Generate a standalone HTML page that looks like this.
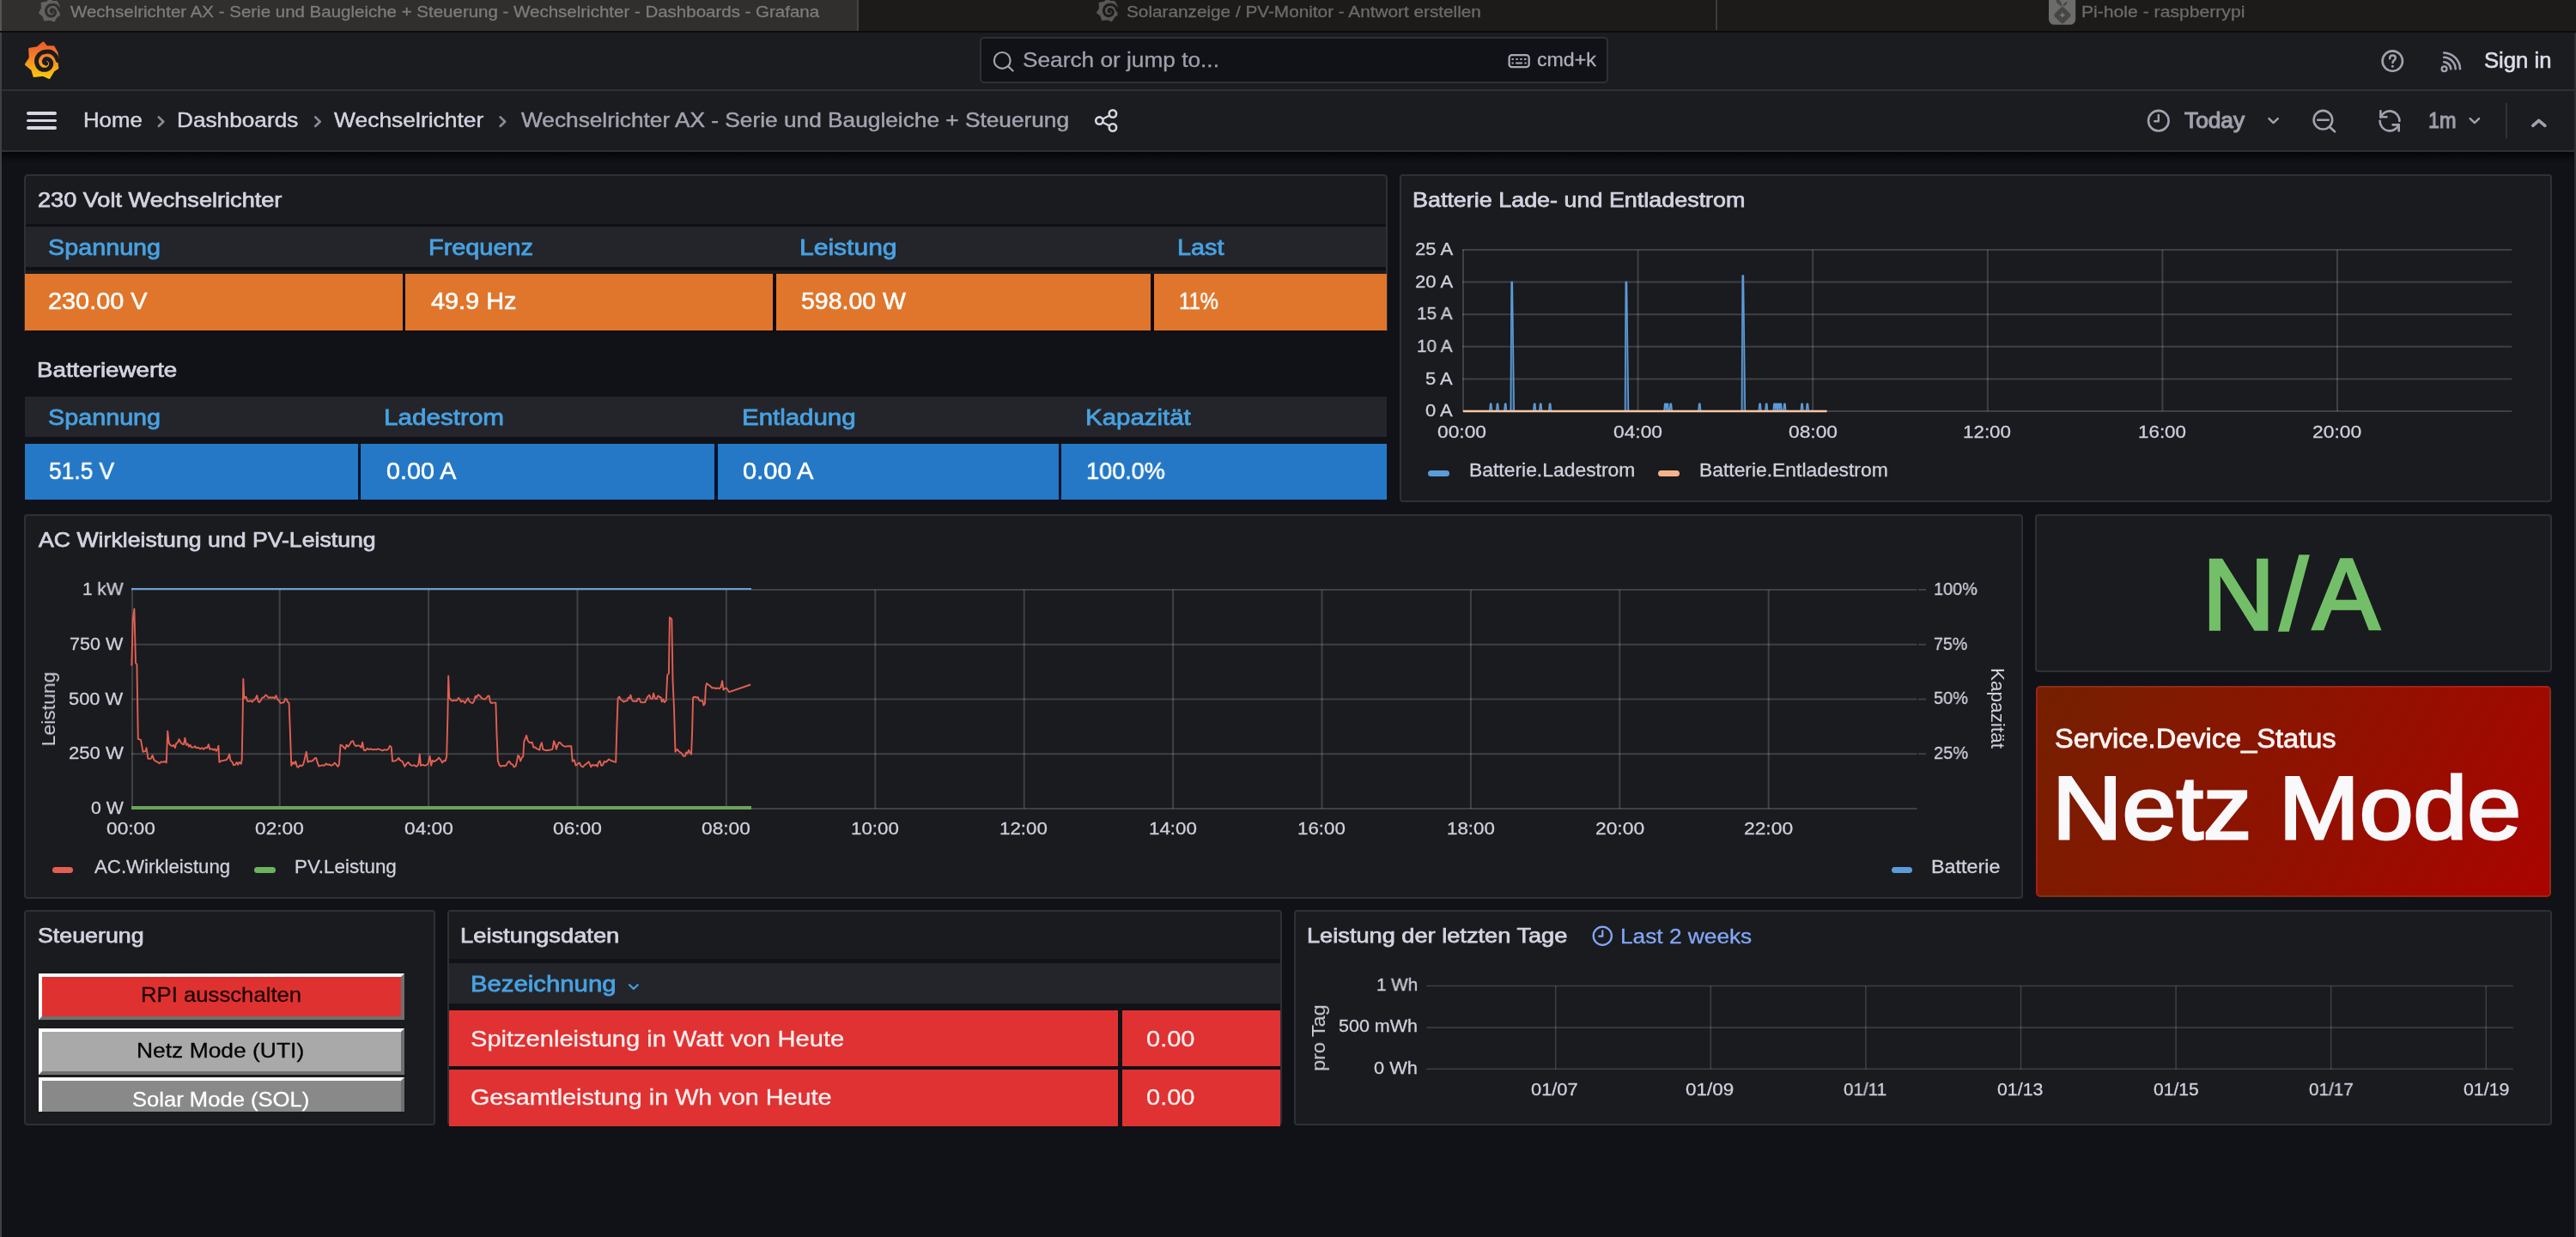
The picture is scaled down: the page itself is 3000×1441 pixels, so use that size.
<!DOCTYPE html>
<html lang="en"><head><meta charset="utf-8"><title>Wechselrichter AX - Serie und Baugleiche + Steuerung - Wechselrichter - Dashboards - Grafana</title>
<style>
html,body{margin:0;padding:0;background:#111217;}
body{width:3000px;height:1441px;position:relative;overflow:hidden;font-family:"Liberation Sans",sans-serif;}
body>div,body>span,body>svg{position:absolute;}
.t{white-space:nowrap;line-height:1;transform-origin:0 50%;will-change:transform;}
</style></head><body>
<div style="left:0px;top:0px;width:3000px;height:36px;background:#1c1b19;"></div>
<div style="left:0px;top:0px;width:1000px;height:36px;background:#302f2d;"></div>
<div style="left:998px;top:0px;width:2px;height:36px;background:#424241;"></div>
<div style="left:0px;top:0px;width:2px;height:36px;background:#555553;"></div>
<div style="left:1998px;top:0px;width:2px;height:35px;background:#3c3b3a;"></div>
<span class="t " style="left:82.05px;top:5.19px;font-size:18.2px;color:#7c7c7b;-webkit-text-stroke:0.3px #7c7c7b;transform:scaleX(1.1265);">Wechselrichter AX - Serie und Baugleiche + Steuerung - Wechselrichter - Dashboards - Grafana</span>
<span class="t " style="left:1312.42px;top:5.19px;font-size:18.2px;color:#6b6b6a;-webkit-text-stroke:0.3px #6b6b6a;transform:scaleX(1.1408);">Solaranzeige / PV-Monitor - Antwort erstellen</span>
<span class="t " style="left:2424.40px;top:4.99px;font-size:18.2px;color:#6b6b6a;-webkit-text-stroke:0.3px #6b6b6a;transform:scaleX(1.1628);">Pi-hole - raspberrypi</span>
<div style="left:0px;top:36px;width:3000px;height:2px;background:#0c0c0e;"></div>
<div style="left:0px;top:38px;width:3000px;height:139px;background:#1b1c20;"></div>
<div style="left:0px;top:104px;width:3000px;height:2px;background:#2f3035;"></div>
<div style="left:0px;top:175px;width:3000px;height:2px;background:#2f3035;"></div>
<div style="left:1141px;top:43px;width:732px;height:54px;background:#111217;border:2px solid #2f3036;border-radius:5px;box-sizing:border-box"></div>
<span class="t " style="left:1190.97px;top:57.81px;font-size:24.8px;color:#9fa0ac;-webkit-text-stroke:0.3px #9fa0ac;transform:scaleX(1.0581);">Search or jump to...</span>
<span class="t " style="left:1789.87px;top:58.75px;font-size:21.8px;color:#aeafbb;-webkit-text-stroke:0.3px #aeafbb;transform:scaleX(1.0615);">cmd+k</span>
<span class="t " style="left:2893.35px;top:58.24px;font-size:25.0px;color:#dcdde8;-webkit-text-stroke:0.6px #dcdde8;transform:scaleX(1.0264);">Sign in</span>
<span class="t " style="left:96.90px;top:127.96px;font-size:24.5px;color:#d3d4e0;-webkit-text-stroke:0.45px #d3d4e0;transform:scaleX(1.0523);">Home</span>
<span class="t " style="left:206.36px;top:127.96px;font-size:24.5px;color:#d3d4e0;-webkit-text-stroke:0.45px #d3d4e0;transform:scaleX(1.0697);">Dashboards</span>
<span class="t " style="left:389.49px;top:127.96px;font-size:24.5px;color:#d3d4e0;-webkit-text-stroke:0.45px #d3d4e0;transform:scaleX(1.0792);">Wechselrichter</span>
<span class="t " style="left:606.79px;top:127.96px;font-size:24.5px;color:#a3a4b0;-webkit-text-stroke:0.45px #a3a4b0;transform:scaleX(1.0717);">Wechselrichter AX - Serie und Baugleiche + Steuerung</span>
<span class="t " style="left:2544.16px;top:127.84px;font-size:25px;color:#a0a1ad;-webkit-text-stroke:1.1px #a0a1ad;transform:scaleX(1.0505);">Today</span>
<span class="t " style="left:2827.91px;top:127.84px;font-size:25px;color:#a0a1ad;-webkit-text-stroke:1.1px #a0a1ad;transform:scaleX(0.9299);">1m</span>
<div style="left:2918px;top:120px;width:2px;height:41px;background:#303137;"></div>
<div style="left:31.3px;top:130.0px;width:34.9px;height:3.8px;background:#d6d7e2;border-radius:2px"></div>
<div style="left:31.3px;top:138.7px;width:34.9px;height:3.8px;background:#d6d7e2;border-radius:2px"></div>
<div style="left:31.3px;top:147.29999999999998px;width:34.9px;height:3.8px;background:#d6d7e2;border-radius:2px"></div>
<div style="left:0px;top:177px;width:3000px;height:1264px;background:#111217;"></div>
<div style="left:0;top:177px;width:3000px;height:12px;background:linear-gradient(#050508,#111217)"></div>
<div style="left:0px;top:38px;width:2px;height:1403px;background:#3f4044;"></div>
<div style="left:2998px;top:38px;width:2px;height:1403px;background:#2e2f34;"></div>
<div style="left:28px;top:203px;width:1588px;height:183px;background:#1a1b1f;border:2px solid #2f3035;border-bottom:none;border-radius:5px 5px 0 0;box-sizing:border-box"></div>
<div style="left:30px;top:260.5px;width:1584px;height:3.5px;background:#0f1015;"></div>
<div style="left:30px;top:264px;width:1584px;height:47px;background:#24252a;"></div>
<div style="left:30px;top:311px;width:1584px;height:4px;background:#0f1015;"></div>
<div style="left:29px;top:319px;width:1586px;height:66.60000000000002px;background:#120805;"></div>
<div style="left:29.2px;top:319.2px;width:439.40000000000003px;height:65.40000000000003px;background:#e0762c;"></div>
<div style="left:472px;top:319.2px;width:428.20000000000005px;height:65.40000000000003px;background:#e0762c;"></div>
<div style="left:903.8px;top:319.2px;width:436.20000000000005px;height:65.40000000000003px;background:#e0762c;"></div>
<div style="left:1343.8px;top:319.2px;width:271.20000000000005px;height:65.40000000000003px;background:#e0762c;"></div>
<div style="left:29px;top:462px;width:1586px;height:47px;background:#24252a;"></div>
<div style="left:29px;top:517px;width:1586px;height:65.60000000000002px;background:#04122a;"></div>
<div style="left:29.2px;top:517px;width:387.5px;height:65px;background:#2478c6;"></div>
<div style="left:420px;top:517px;width:412.20000000000005px;height:65px;background:#2478c6;"></div>
<div style="left:835.8px;top:517px;width:396.79999999999995px;height:65px;background:#2478c6;"></div>
<div style="left:1236px;top:517px;width:379px;height:65px;background:#2478c6;"></div>
<span class="t " style="left:43.92px;top:220.73px;font-size:24.3px;color:#d3d4e0;-webkit-text-stroke:0.75px #d3d4e0;transform:scaleX(1.1160);">230 Volt Wechselrichter</span>
<span class="t " style="left:42.99px;top:418.93px;font-size:24.3px;color:#d3d4e0;-webkit-text-stroke:0.75px #d3d4e0;transform:scaleX(1.1403);">Batteriewerte</span>
<span class="t " style="left:56.31px;top:275.07px;font-size:26.5px;color:#47a2e3;-webkit-text-stroke:0.8px #47a2e3;transform:scaleX(1.0848);">Spannung</span>
<span class="t " style="left:499.22px;top:275.07px;font-size:26.5px;color:#47a2e3;-webkit-text-stroke:0.8px #47a2e3;transform:scaleX(1.0890);">Frequenz</span>
<span class="t " style="left:930.52px;top:275.07px;font-size:26.5px;color:#47a2e3;-webkit-text-stroke:0.8px #47a2e3;transform:scaleX(1.1336);">Leistung</span>
<span class="t " style="left:1371.02px;top:275.07px;font-size:26.5px;color:#47a2e3;-webkit-text-stroke:0.8px #47a2e3;transform:scaleX(1.0881);">Last</span>
<span class="t " style="left:55.73px;top:337.07px;font-size:27.8px;color:#ffffff;-webkit-text-stroke:0.55px #ffffff;transform:scaleX(1.0386);">230.00 V</span>
<span class="t " style="left:502.13px;top:337.07px;font-size:27.8px;color:#ffffff;-webkit-text-stroke:0.55px #ffffff;transform:scaleX(1.0376);">49.9 Hz</span>
<span class="t " style="left:933.24px;top:337.07px;font-size:27.8px;color:#ffffff;-webkit-text-stroke:0.55px #ffffff;transform:scaleX(1.0242);">598.00 W</span>
<span class="t " style="left:1372.69px;top:337.07px;font-size:27.8px;color:#ffffff;-webkit-text-stroke:0.55px #ffffff;transform:scaleX(0.8560);">11%</span>
<span class="t " style="left:56.31px;top:473.37px;font-size:26.5px;color:#47a2e3;-webkit-text-stroke:0.8px #47a2e3;transform:scaleX(1.0848);">Spannung</span>
<span class="t " style="left:447.35px;top:473.37px;font-size:26.5px;color:#47a2e3;-webkit-text-stroke:0.8px #47a2e3;transform:scaleX(1.1187);">Ladestrom</span>
<span class="t " style="left:863.67px;top:473.37px;font-size:26.5px;color:#47a2e3;-webkit-text-stroke:0.8px #47a2e3;transform:scaleX(1.1111);">Entladung</span>
<span class="t " style="left:1263.67px;top:473.37px;font-size:26.5px;color:#47a2e3;-webkit-text-stroke:0.8px #47a2e3;transform:scaleX(1.1108);">Kapazität</span>
<span class="t " style="left:56.62px;top:535.27px;font-size:27.8px;color:#ffffff;-webkit-text-stroke:0.55px #ffffff;transform:scaleX(0.9468);">51.5 V</span>
<span class="t " style="left:449.73px;top:535.27px;font-size:27.8px;color:#ffffff;-webkit-text-stroke:0.55px #ffffff;transform:scaleX(1.0328);">0.00 A</span>
<span class="t " style="left:865.31px;top:535.27px;font-size:27.8px;color:#ffffff;-webkit-text-stroke:0.55px #ffffff;transform:scaleX(1.0457);">0.00 A</span>
<span class="t " style="left:1264.74px;top:535.27px;font-size:27.8px;color:#ffffff;-webkit-text-stroke:0.55px #ffffff;transform:scaleX(0.9737);">100.0%</span>
<div style="left:1630px;top:203px;width:1342px;height:382px;background:#1a1b1f;border:2px solid #2f3035;border-radius:4px;box-sizing:border-box"></div>
<span class="t " style="left:1645.45px;top:220.53px;font-size:24.3px;color:#d3d4e0;-webkit-text-stroke:0.75px #d3d4e0;transform:scaleX(1.1076);">Batterie Lade- und Entladestrom</span>
<span class="t " style="left:1647.65px;top:279.14px;font-size:21.1px;color:#cfd0dc;-webkit-text-stroke:0.3px #cfd0dc;transform:scaleX(1.0451);">25 A</span>
<span class="t " style="left:1647.65px;top:316.74px;font-size:21.1px;color:#cfd0dc;-webkit-text-stroke:0.3px #cfd0dc;transform:scaleX(1.0451);">20 A</span>
<span class="t " style="left:1650.30px;top:354.34px;font-size:21.1px;color:#cfd0dc;-webkit-text-stroke:0.3px #cfd0dc;transform:scaleX(0.9823);">15 A</span>
<span class="t " style="left:1650.30px;top:391.94px;font-size:21.1px;color:#cfd0dc;-webkit-text-stroke:0.3px #cfd0dc;transform:scaleX(0.9823);">10 A</span>
<span class="t " style="left:1659.97px;top:429.54px;font-size:21.1px;color:#cfd0dc;-webkit-text-stroke:0.3px #cfd0dc;transform:scaleX(1.0423);">5 A</span>
<span class="t " style="left:1659.97px;top:467.14px;font-size:21.1px;color:#cfd0dc;-webkit-text-stroke:0.3px #cfd0dc;transform:scaleX(1.0423);">0 A</span>
<span class="t " style="left:1674.04px;top:492.44px;font-size:21.1px;color:#cfd0dc;-webkit-text-stroke:0.3px #cfd0dc;transform:scaleX(1.0808);">00:00</span>
<span class="t " style="left:1879.04px;top:492.44px;font-size:21.1px;color:#cfd0dc;-webkit-text-stroke:0.3px #cfd0dc;transform:scaleX(1.0808);">04:00</span>
<span class="t " style="left:2082.64px;top:492.44px;font-size:21.1px;color:#cfd0dc;-webkit-text-stroke:0.3px #cfd0dc;transform:scaleX(1.0808);">08:00</span>
<span class="t " style="left:2286.37px;top:492.44px;font-size:21.1px;color:#cfd0dc;-webkit-text-stroke:0.3px #cfd0dc;transform:scaleX(1.0609);">12:00</span>
<span class="t " style="left:2489.97px;top:492.44px;font-size:21.1px;color:#cfd0dc;-webkit-text-stroke:0.3px #cfd0dc;transform:scaleX(1.0609);">16:00</span>
<span class="t " style="left:2693.21px;top:492.44px;font-size:21.1px;color:#cfd0dc;-webkit-text-stroke:0.3px #cfd0dc;transform:scaleX(1.0852);">20:00</span>
<div style="left:1662.7px;top:547.6999999999999px;width:25.0px;height:7.4px;background:#5b9bd8;border-radius:4px"></div>
<span class="t " style="left:1711.26px;top:537.42px;font-size:21.6px;color:#cfd0dc;-webkit-text-stroke:0.3px #cfd0dc;transform:scaleX(1.0598);">Batterie.Ladestrom</span>
<div style="left:1930.8px;top:547.6999999999999px;width:25.0px;height:7.4px;background:#f3b48b;border-radius:4px"></div>
<span class="t " style="left:1979.26px;top:537.42px;font-size:21.6px;color:#cfd0dc;-webkit-text-stroke:0.3px #cfd0dc;transform:scaleX(1.0582);">Batterie.Entladestrom</span>
<div style="left:28px;top:599px;width:2328px;height:448px;background:#1a1b1f;border:2px solid #2f3035;border-radius:4px;box-sizing:border-box"></div>
<span class="t " style="left:44.91px;top:616.53px;font-size:24.3px;color:#d3d4e0;-webkit-text-stroke:0.75px #d3d4e0;transform:scaleX(1.0971);">AC Wirkleistung und PV-Leistung</span>
<span class="t " style="left:95.99px;top:675.14px;font-size:21.1px;color:#cfd0dc;-webkit-text-stroke:0.3px #cfd0dc;transform:scaleX(0.9888);">1 kW</span>
<span class="t " style="left:81.27px;top:738.89px;font-size:21.1px;color:#cfd0dc;-webkit-text-stroke:0.3px #cfd0dc;transform:scaleX(1.0205);">750 W</span>
<span class="t " style="left:80.27px;top:802.64px;font-size:21.1px;color:#cfd0dc;-webkit-text-stroke:0.3px #cfd0dc;transform:scaleX(1.0369);">500 W</span>
<span class="t " style="left:79.54px;top:866.39px;font-size:21.1px;color:#cfd0dc;-webkit-text-stroke:0.3px #cfd0dc;transform:scaleX(1.0489);">250 W</span>
<span class="t " style="left:105.70px;top:930.14px;font-size:21.1px;color:#cfd0dc;-webkit-text-stroke:0.3px #cfd0dc;transform:scaleX(1.0080);">0 W</span>
<span class="t " style="left:2251.56px;top:674.94px;font-size:21.1px;color:#cfd0dc;-webkit-text-stroke:0.3px #cfd0dc;transform:scaleX(0.9411);">100%</span>
<span class="t " style="left:2252.07px;top:738.69px;font-size:21.1px;color:#cfd0dc;-webkit-text-stroke:0.3px #cfd0dc;transform:scaleX(0.9293);">75%</span>
<span class="t " style="left:2252.25px;top:802.44px;font-size:21.1px;color:#cfd0dc;-webkit-text-stroke:0.3px #cfd0dc;transform:scaleX(0.9442);">50%</span>
<span class="t " style="left:2252.05px;top:866.19px;font-size:21.1px;color:#cfd0dc;-webkit-text-stroke:0.3px #cfd0dc;transform:scaleX(0.9491);">25%</span>
<span class="t " style="left:123.84px;top:954.14px;font-size:21.1px;color:#cfd0dc;-webkit-text-stroke:0.3px #cfd0dc;transform:scaleX(1.0769);">00:00</span>
<span class="t " style="left:297.24px;top:954.14px;font-size:21.1px;color:#cfd0dc;-webkit-text-stroke:0.3px #cfd0dc;transform:scaleX(1.0769);">02:00</span>
<span class="t " style="left:470.64px;top:954.14px;font-size:21.1px;color:#cfd0dc;-webkit-text-stroke:0.3px #cfd0dc;transform:scaleX(1.0769);">04:00</span>
<span class="t " style="left:644.04px;top:954.14px;font-size:21.1px;color:#cfd0dc;-webkit-text-stroke:0.3px #cfd0dc;transform:scaleX(1.0769);">06:00</span>
<span class="t " style="left:817.44px;top:954.14px;font-size:21.1px;color:#cfd0dc;-webkit-text-stroke:0.3px #cfd0dc;transform:scaleX(1.0769);">08:00</span>
<span class="t " style="left:990.98px;top:954.14px;font-size:21.1px;color:#cfd0dc;-webkit-text-stroke:0.3px #cfd0dc;transform:scaleX(1.0569);">10:00</span>
<span class="t " style="left:1164.38px;top:954.14px;font-size:21.1px;color:#cfd0dc;-webkit-text-stroke:0.3px #cfd0dc;transform:scaleX(1.0569);">12:00</span>
<span class="t " style="left:1337.78px;top:954.14px;font-size:21.1px;color:#cfd0dc;-webkit-text-stroke:0.3px #cfd0dc;transform:scaleX(1.0569);">14:00</span>
<span class="t " style="left:1511.18px;top:954.14px;font-size:21.1px;color:#cfd0dc;-webkit-text-stroke:0.3px #cfd0dc;transform:scaleX(1.0569);">16:00</span>
<span class="t " style="left:1684.58px;top:954.14px;font-size:21.1px;color:#cfd0dc;-webkit-text-stroke:0.3px #cfd0dc;transform:scaleX(1.0569);">18:00</span>
<span class="t " style="left:1857.61px;top:954.14px;font-size:21.1px;color:#cfd0dc;-webkit-text-stroke:0.3px #cfd0dc;transform:scaleX(1.0813);">20:00</span>
<span class="t " style="left:2031.01px;top:954.14px;font-size:21.1px;color:#cfd0dc;-webkit-text-stroke:0.3px #cfd0dc;transform:scaleX(1.0813);">22:00</span>
<div style="left:60.8px;top:1009.9px;width:24.700000000000003px;height:7.4px;background:#e25f52;border-radius:4px"></div>
<span class="t " style="left:110.09px;top:999.12px;font-size:21.6px;color:#cfd0dc;-webkit-text-stroke:0.3px #cfd0dc;transform:scaleX(1.0300);">AC.Wirkleistung</span>
<div style="left:296.4px;top:1009.9px;width:24.200000000000045px;height:7.4px;background:#6bb35f;border-radius:4px"></div>
<span class="t " style="left:343.30px;top:999.12px;font-size:21.6px;color:#cfd0dc;-webkit-text-stroke:0.3px #cfd0dc;transform:scaleX(1.0382);">PV.Leistung</span>
<div style="left:2202.5px;top:1009.9px;width:24.699999999999818px;height:7.4px;background:#5b9bd8;border-radius:4px"></div>
<span class="t " style="left:2249.32px;top:999.12px;font-size:21.6px;color:#cfd0dc;-webkit-text-stroke:0.3px #cfd0dc;transform:scaleX(1.0821);">Batterie</span>
<span class="t" style="left:56.8px;top:825.6px;font-size:22.0px;color:#cfd0dc;transform:translate(-50%,-50%) rotate(-90deg) scaleX(1.0429);transform-origin:center">Leistung</span>
<span class="t" style="left:2326.4px;top:825.0px;font-size:22.0px;color:#cfd0dc;transform:translate(-50%,-50%) rotate(90deg) scaleX(1.0250);transform-origin:center">Kapazität</span>
<div style="left:2370px;top:599px;width:602px;height:184px;background:#1a1b1f;border:2px solid #2f3035;border-radius:4px;box-sizing:border-box"></div>
<span class="t " style="left:2564.58px;top:634.58px;font-size:116.5px;color:#73bf69;-webkit-text-stroke:3.4px #73bf69;letter-spacing:6px;">N/A</span>
<div style="left:2371px;top:799px;width:600px;height:246px;border-radius:5px;background:linear-gradient(120deg,#742000,#aa0400);border:2px solid rgba(210,200,210,0.12);box-sizing:border-box"></div>
<span class="t " style="left:2392.93px;top:844.99px;font-size:31.2px;color:#fff4f2;-webkit-text-stroke:0.8px #fff4f2;transform:scaleX(1.0441);">Service.Device_Status</span>
<span class="t " style="left:2389.88px;top:889.04px;font-size:104.5px;color:#f9f9fb;-webkit-text-stroke:3.0px #f9f9fb;transform:scaleX(1.0809);">Netz Mode</span>
<div style="left:28px;top:1060px;width:479px;height:251px;background:#1a1b1f;border:2px solid #2f3035;border-radius:4px;box-sizing:border-box"></div>
<span class="t " style="left:43.77px;top:1078.43px;font-size:24.3px;color:#d3d4e0;-webkit-text-stroke:0.75px #d3d4e0;transform:scaleX(1.1021);">Steuerung</span>
<div style="left:44.5px;top:1134px;width:426px;height:53.5px;background:#e03131;border:4px solid;border-color:#fdfdfd #6f6f6f #6f6f6f #fdfdfd;box-sizing:border-box;"></div>
<span class="t " style="left:163.63px;top:1147.37px;font-size:23.9px;color:#1a0505;-webkit-text-stroke:0.3px #1a0505;transform:scaleX(1.0755);">RPI ausschalten</span>
<div style="left:44.5px;top:1198px;width:426px;height:53.5px;background:#a9a9a9;border:4px solid;border-color:#fdfdfd #6f6f6f #6f6f6f #fdfdfd;box-sizing:border-box;"></div>
<span class="t " style="left:159.37px;top:1211.97px;font-size:23.9px;color:#050505;-webkit-text-stroke:0.3px #050505;transform:scaleX(1.1056);">Netz Mode (UTI)</span>
<div style="left:44.5px;top:1255px;width:426px;height:40px;background:#898989;border:4px solid;border-color:#fdfdfd #6f6f6f #6f6f6f #fdfdfd;box-sizing:border-box;border-bottom:none;"></div>
<span class="t " style="left:154.20px;top:1269.47px;font-size:23.9px;color:#ffffff;-webkit-text-stroke:0.3px #ffffff;transform:scaleX(1.0712);">Solar Mode (SOL)</span>
<div style="left:521px;top:1060px;width:972px;height:251px;background:#1a1b1f;border:2px solid #2f3035;border-radius:4px;box-sizing:border-box"></div>
<span class="t " style="left:535.52px;top:1078.43px;font-size:24.3px;color:#d3d4e0;-webkit-text-stroke:0.75px #d3d4e0;transform:scaleX(1.1244);">Leistungsdaten</span>
<div style="left:523px;top:1117px;width:968px;height:5px;background:#111217;"></div>
<div style="left:523px;top:1122px;width:968px;height:47px;background:#24252a;"></div>
<div style="left:523px;top:1169px;width:968px;height:143px;background:#111217;"></div>
<span class="t " style="left:548.18px;top:1132.67px;font-size:26.5px;color:#47a2e3;-webkit-text-stroke:0.8px #47a2e3;transform:scaleX(1.1063);">Bezeichnung</span>
<div style="left:523px;top:1177px;width:779.4000000000001px;height:64.70000000000005px;background:#e03232;"></div>
<div style="left:1306.6px;top:1177px;width:184.4000000000001px;height:64.70000000000005px;background:#e03232;"></div>
<div style="left:523px;top:1246px;width:779.4000000000001px;height:66px;background:#e03232;"></div>
<div style="left:1306.6px;top:1246px;width:184.4000000000001px;height:66px;background:#e03232;"></div>
<span class="t " style="left:548.44px;top:1196.79px;font-size:26.0px;color:#fbeeee;-webkit-text-stroke:0.3px #fbeeee;transform:scaleX(1.1180);">Spitzenleistung in Watt von Heute</span>
<span class="t " style="left:548.31px;top:1265.49px;font-size:26.0px;color:#fbeeee;-webkit-text-stroke:0.3px #fbeeee;transform:scaleX(1.1061);">Gesamtleistung in Wh von Heute</span>
<span class="t " style="left:1335.39px;top:1196.79px;font-size:26.0px;color:#fbeeee;-webkit-text-stroke:0.3px #fbeeee;transform:scaleX(1.1163);">0.00</span>
<span class="t " style="left:1335.39px;top:1265.49px;font-size:26.0px;color:#fbeeee;-webkit-text-stroke:0.3px #fbeeee;transform:scaleX(1.1163);">0.00</span>
<div style="left:1507px;top:1060px;width:1465px;height:251px;background:#1a1b1f;border:2px solid #2f3035;border-radius:4px;box-sizing:border-box"></div>
<span class="t " style="left:1522.03px;top:1078.43px;font-size:24.3px;color:#d3d4e0;-webkit-text-stroke:0.75px #d3d4e0;transform:scaleX(1.1191);">Leistung der letzten Tage</span>
<span class="t " style="left:1887.38px;top:1078.63px;font-size:24.3px;color:#82a7f8;-webkit-text-stroke:0.3px #82a7f8;transform:scaleX(1.0806);">Last 2 weeks</span>
<span class="t " style="left:1602.70px;top:1136.04px;font-size:21.1px;color:#cfd0dc;-webkit-text-stroke:0.3px #cfd0dc;transform:scaleX(0.9803);">1 Wh</span>
<span class="t " style="left:1558.99px;top:1184.44px;font-size:21.1px;color:#cfd0dc;-webkit-text-stroke:0.3px #cfd0dc;transform:scaleX(1.0194);">500 mWh</span>
<span class="t " style="left:1600.18px;top:1232.84px;font-size:21.1px;color:#cfd0dc;-webkit-text-stroke:0.3px #cfd0dc;transform:scaleX(1.0329);">0 Wh</span>
<span class="t " style="left:1783.08px;top:1258.24px;font-size:21.1px;color:#cfd0dc;-webkit-text-stroke:0.3px #cfd0dc;transform:scaleX(1.0353);">01/07</span>
<span class="t " style="left:1963.25px;top:1258.24px;font-size:21.1px;color:#cfd0dc;-webkit-text-stroke:0.3px #cfd0dc;transform:scaleX(1.0645);">01/09</span>
<span class="t " style="left:2147.22px;top:1258.24px;font-size:21.1px;color:#cfd0dc;-webkit-text-stroke:0.3px #cfd0dc;transform:scaleX(0.9782);">01/11</span>
<span class="t " style="left:2325.75px;top:1258.24px;font-size:21.1px;color:#cfd0dc;-webkit-text-stroke:0.3px #cfd0dc;transform:scaleX(1.0105);">01/13</span>
<span class="t " style="left:2508.01px;top:1258.24px;font-size:21.1px;color:#cfd0dc;-webkit-text-stroke:0.3px #cfd0dc;">01/15</span>
<span class="t " style="left:2688.67px;top:1258.24px;font-size:21.1px;color:#cfd0dc;-webkit-text-stroke:0.3px #cfd0dc;transform:scaleX(0.9822);">01/17</span>
<span class="t " style="left:2869.35px;top:1258.24px;font-size:21.1px;color:#cfd0dc;-webkit-text-stroke:0.3px #cfd0dc;transform:scaleX(1.0116);">01/19</span>
<span class="t" style="left:1535.5px;top:1209px;font-size:22.0px;color:#cfd0dc;transform:translate(-50%,-50%) rotate(-90deg) scaleX(1.0630);transform-origin:center">pro Tag</span>
<svg style="left:0;top:0" width="3000" height="1441" viewBox="0 0 3000 1441" fill="none">
<path d="M1703.0 291.0H2925.3" stroke="rgba(214,214,226,0.2)" stroke-width="2"/>
<path d="M1703.0 328.6H2925.3" stroke="rgba(214,214,226,0.2)" stroke-width="2"/>
<path d="M1703.0 366.2H2925.3" stroke="rgba(214,214,226,0.2)" stroke-width="2"/>
<path d="M1703.0 403.8H2925.3" stroke="rgba(214,214,226,0.2)" stroke-width="2"/>
<path d="M1703.0 441.4H2925.3" stroke="rgba(214,214,226,0.2)" stroke-width="2"/>
<path d="M1703.0 479.0H2925.3" stroke="rgba(214,214,226,0.2)" stroke-width="2"/>
<path d="M1704.0 291.0V479.0" stroke="rgba(214,214,226,0.2)" stroke-width="2"/>
<path d="M1907.6 291.0V479.0" stroke="rgba(214,214,226,0.2)" stroke-width="2"/>
<path d="M2111.2 291.0V479.0" stroke="rgba(214,214,226,0.2)" stroke-width="2"/>
<path d="M2314.8 291.0V479.0" stroke="rgba(214,214,226,0.2)" stroke-width="2"/>
<path d="M2518.4 291.0V479.0" stroke="rgba(214,214,226,0.2)" stroke-width="2"/>
<path d="M2722.0 291.0V479.0" stroke="rgba(214,214,226,0.2)" stroke-width="2"/>
<path d="M1704.0 479.0L1734.9 479.0L1735.7 470.4L1736.7 470.4L1737.5 479.0L1742.7 479.0L1743.5 470.4L1744.5 470.4L1745.3 479.0L1751.9 479.0L1752.7 470.4L1753.7 470.4L1754.5 479.0L1759.4 479.0L1760.2 328.6L1761.2 328.6L1763.2 479.0L1785.9 479.0L1786.7 470.4L1787.7 470.4L1788.5 479.0L1792.9 479.0L1793.7 470.4L1794.7 470.4L1795.5 479.0L1803.8 479.0L1804.6 470.4L1805.6 470.4L1806.4 479.0L1892.6 479.0L1893.4 328.6L1894.4 328.6L1896.4 479.0L1938.0 479.0L1938.8 470.4L1939.8 470.4L1940.6 479.0L1940.6 479.0L1941.4 470.4L1942.4 470.4L1943.2 479.0L1944.5 479.0L1945.3 470.4L1946.3 470.4L1947.1 479.0L1978.0 479.0L1978.8 470.4L1979.8 470.4L1980.6 479.0L2028.5 479.0L2029.3 321.1L2030.3 321.1L2032.3 479.0L2048.3 479.0L2049.1 470.4L2050.1 470.4L2050.9 479.0L2055.9 479.0L2056.7 470.4L2057.7 470.4L2058.5 479.0L2065.2 479.0L2066.0 470.4L2067.0 470.4L2067.8 479.0L2067.5 479.0L2068.3 470.4L2069.3 470.4L2070.1 479.0L2069.9 479.0L2070.7 470.4L2071.7 470.4L2072.5 479.0L2072.5 479.0L2073.3 470.4L2074.3 470.4L2075.1 479.0L2077.1 479.0L2077.9 470.4L2078.9 470.4L2079.7 479.0L2097.3 479.0L2098.1 470.4L2099.1 470.4L2099.9 479.0L2103.6 479.0L2104.4 470.4L2105.4 470.4L2106.2 479.0L2127.5 479.0Z" fill="#5b9bd8" fill-opacity="0.35" stroke="none"/>
<path d="M1704.0 479.0L1734.9 479.0L1735.7 470.4L1736.7 470.4L1737.5 479.0L1742.7 479.0L1743.5 470.4L1744.5 470.4L1745.3 479.0L1751.9 479.0L1752.7 470.4L1753.7 470.4L1754.5 479.0L1759.4 479.0L1760.2 328.6L1761.2 328.6L1763.2 479.0L1785.9 479.0L1786.7 470.4L1787.7 470.4L1788.5 479.0L1792.9 479.0L1793.7 470.4L1794.7 470.4L1795.5 479.0L1803.8 479.0L1804.6 470.4L1805.6 470.4L1806.4 479.0L1892.6 479.0L1893.4 328.6L1894.4 328.6L1896.4 479.0L1938.0 479.0L1938.8 470.4L1939.8 470.4L1940.6 479.0L1940.6 479.0L1941.4 470.4L1942.4 470.4L1943.2 479.0L1944.5 479.0L1945.3 470.4L1946.3 470.4L1947.1 479.0L1978.0 479.0L1978.8 470.4L1979.8 470.4L1980.6 479.0L2028.5 479.0L2029.3 321.1L2030.3 321.1L2032.3 479.0L2048.3 479.0L2049.1 470.4L2050.1 470.4L2050.9 479.0L2055.9 479.0L2056.7 470.4L2057.7 470.4L2058.5 479.0L2065.2 479.0L2066.0 470.4L2067.0 470.4L2067.8 479.0L2067.5 479.0L2068.3 470.4L2069.3 470.4L2070.1 479.0L2069.9 479.0L2070.7 470.4L2071.7 470.4L2072.5 479.0L2072.5 479.0L2073.3 470.4L2074.3 470.4L2075.1 479.0L2077.1 479.0L2077.9 470.4L2078.9 470.4L2079.7 479.0L2097.3 479.0L2098.1 470.4L2099.1 470.4L2099.9 479.0L2103.6 479.0L2104.4 470.4L2105.4 470.4L2106.2 479.0L2127.5 479.0" fill="none" stroke="#5b9bd8" stroke-width="1.7" stroke-linejoin="round"/>
<path d="M1704.0 479.0H2127.5" stroke="#f6c6a4" stroke-width="2.4"/>
<path d="M153.0 687.0H2232.5" stroke="rgba(214,214,226,0.2)" stroke-width="2"/>
<path d="M153.0 750.8H2232.5" stroke="rgba(214,214,226,0.2)" stroke-width="2"/>
<path d="M153.0 814.5H2232.5" stroke="rgba(214,214,226,0.2)" stroke-width="2"/>
<path d="M153.0 878.2H2232.5" stroke="rgba(214,214,226,0.2)" stroke-width="2"/>
<path d="M153.0 942.0H2232.5" stroke="rgba(214,214,226,0.2)" stroke-width="2"/>
<path d="M2234.0 687.0H2243.0" stroke="rgba(214,214,226,0.2)" stroke-width="2"/>
<path d="M2234.0 750.8H2243.0" stroke="rgba(214,214,226,0.2)" stroke-width="2"/>
<path d="M2234.0 814.5H2243.0" stroke="rgba(214,214,226,0.2)" stroke-width="2"/>
<path d="M2234.0 878.2H2243.0" stroke="rgba(214,214,226,0.2)" stroke-width="2"/>
<path d="M154.0 687.0V942.0" stroke="rgba(214,214,226,0.2)" stroke-width="2"/>
<path d="M325.7 687.0V942.0" stroke="rgba(214,214,226,0.2)" stroke-width="2"/>
<path d="M499.1 687.0V942.0" stroke="rgba(214,214,226,0.2)" stroke-width="2"/>
<path d="M672.5 687.0V942.0" stroke="rgba(214,214,226,0.2)" stroke-width="2"/>
<path d="M845.9 687.0V942.0" stroke="rgba(214,214,226,0.2)" stroke-width="2"/>
<path d="M1019.3 687.0V942.0" stroke="rgba(214,214,226,0.2)" stroke-width="2"/>
<path d="M1192.7 687.0V942.0" stroke="rgba(214,214,226,0.2)" stroke-width="2"/>
<path d="M1366.1 687.0V942.0" stroke="rgba(214,214,226,0.2)" stroke-width="2"/>
<path d="M1539.5 687.0V942.0" stroke="rgba(214,214,226,0.2)" stroke-width="2"/>
<path d="M1712.9 687.0V942.0" stroke="rgba(214,214,226,0.2)" stroke-width="2"/>
<path d="M1886.3 687.0V942.0" stroke="rgba(214,214,226,0.2)" stroke-width="2"/>
<path d="M2059.7 687.0V942.0" stroke="rgba(214,214,226,0.2)" stroke-width="2"/>
<path d="M153.3 775.4L154.7 722.2L156.4 709.2L158.0 772.4L159.4 773.4L160.8 860.8L164.0 861.8L166.5 875.8L169.5 874.8L170.5 871.2L172.5 883.9L175.6 883.9L177.6 879.9L179.2 884.9L181.6 886.9L183.6 887.9L185.7 889.3L187.7 887.3L189.7 887.9L191.7 886.9L193.8 888.5L195.2 851.7L196.8 865.8L198.8 868.4L200.8 869.2L202.4 867.8L203.9 871.2L205.3 865.8L206.9 865.2L208.5 861.2L210.5 864.8L212.5 866.8L214.0 867.2L215.4 859.8L217.0 867.8L218.6 866.4L220.0 869.8L221.4 867.8L223.1 870.8L225.5 870.4L227.1 869.2L228.7 871.4L230.7 870.8L233.2 872.4L235.2 871.2L237.2 872.8L239.2 870.8L241.2 871.4L242.9 867.2L244.3 872.8L246.9 872.4L248.9 873.8L250.3 872.4L251.8 874.8L253.4 872.8L254.4 868.8L255.4 887.9L257.4 886.5L260.4 885.9L263.5 885.3L265.5 882.9L267.1 878.5L268.5 885.9L270.6 887.9L272.0 891.3L274.0 890.9L275.6 887.9L277.2 890.9L278.6 887.9L280.7 889.9L281.7 884.9L282.7 832.7L283.3 790.9L284.3 813.6L285.3 812.0L286.7 812.0L288.1 816.6L290.2 817.0L291.8 816.2L293.8 817.6L295.4 815.6L297.2 814.6L299.2 810.2L300.9 817.6L302.3 818.0L303.9 815.6L305.5 812.6L307.5 812.2L309.4 809.6L311.4 811.0L313.0 813.2L315.0 812.0L316.4 813.0L318.0 812.2L319.7 813.6L321.5 810.2L323.1 814.6L325.1 816.6L326.7 819.2L328.6 818.6L330.6 818.2L332.2 814.0L333.8 814.6L335.2 818.2L336.6 818.6L337.9 852.8L339.3 891.9L341.3 887.9L342.7 889.9L344.3 886.9L345.9 892.9L347.3 893.9L349.4 891.5L351.4 892.3L353.0 890.9L354.4 885.9L356.8 875.8L358.5 887.9L360.5 886.5L362.5 886.9L364.5 885.9L366.5 883.3L368.2 882.9L369.6 887.9L371.2 892.5L373.6 891.9L375.6 891.3L377.7 891.9L379.7 889.5L381.7 890.9L383.7 890.5L385.7 891.9L387.8 890.9L389.8 888.5L391.0 889.9L393.4 892.9L394.9 890.9L396.5 867.8L398.5 868.4L400.5 870.8L402.1 872.4L403.5 867.8L405.6 869.8L407.6 866.8L409.2 863.8L411.2 863.2L412.6 867.2L414.7 869.2L416.7 868.4L418.7 868.8L420.7 870.8L422.1 864.8L423.8 873.8L425.8 874.2L427.8 871.8L429.8 873.2L431.8 872.4L433.9 873.4L435.9 872.8L437.9 873.4L440.3 872.4L443.0 873.4L445.6 874.4L448.0 873.2L450.0 873.8L452.1 872.8L454.1 868.8L455.7 870.4L457.1 886.9L459.7 886.5L462.2 885.3L464.2 882.9L466.2 885.9L468.6 886.9L471.3 892.9L473.3 889.9L475.3 887.9L477.7 890.9L479.9 891.9L482.4 891.3L484.8 892.9L486.4 891.9L487.4 889.9L488.8 878.5L490.0 891.9L492.5 890.9L494.5 891.9L496.5 891.3L498.5 889.9L500.6 880.9L502.2 891.9L503.6 885.9L505.6 887.3L507.6 885.9L509.7 884.5L511.1 882.5L513.1 884.9L515.1 888.5L517.1 885.9L518.7 886.5L520.2 880.9L521.4 832.7L522.2 787.5L523.2 812.6L524.8 815.0L526.8 816.6L528.9 815.6L530.9 816.2L532.5 815.6L533.9 813.0L535.3 814.2L536.9 817.6L538.6 816.2L540.0 817.0L541.4 819.0L543.0 816.6L545.0 813.2L546.6 817.0L548.7 818.6L550.5 819.0L552.1 816.6L553.7 811.0L555.1 812.6L556.7 809.2L558.8 810.6L560.8 813.2L562.8 814.2L564.8 814.6L566.8 812.6L568.3 810.6L569.7 810.6L570.9 817.6L572.3 819.0L574.3 818.6L577.4 818.6L578.4 852.8L579.8 885.9L581.4 890.9L583.0 892.9L585.0 891.9L587.1 892.3L589.5 891.5L591.5 887.9L593.1 886.9L595.1 889.9L597.2 890.9L598.6 893.5L600.6 892.5L602.0 886.9L603.2 879.9L604.6 880.9L606.1 886.5L607.7 882.9L609.3 880.9L610.3 863.8L611.7 860.4L613.1 856.8L614.7 862.8L616.8 865.2L619.8 864.8L621.4 870.8L623.4 870.4L624.8 872.2L626.9 872.8L628.3 873.8L629.3 868.8L630.9 865.2L632.3 872.8L634.4 873.8L636.8 874.2L639.4 873.8L641.8 873.4L643.4 872.8L645.1 863.2L646.5 866.8L647.9 872.8L649.5 867.8L651.1 864.8L652.5 865.2L654.6 867.8L656.6 869.2L658.6 869.8L660.6 869.2L662.6 869.2L665.3 869.2L666.7 886.9L668.7 885.3L670.7 891.9L672.8 889.9L674.8 888.5L676.8 892.5L678.8 893.5L680.8 891.3L682.9 889.9L685.5 887.3L686.9 889.9L688.3 893.5L689.9 890.9L692.0 891.9L694.0 890.9L695.6 892.9L697.0 887.9L698.6 886.5L700.4 891.9L702.1 891.3L703.7 886.9L705.7 887.9L707.1 886.5L709.1 884.5L711.2 885.9L713.2 886.5L715.2 887.3L717.2 887.9L718.2 852.8L719.6 813.6L721.3 811.6L722.9 815.0L724.7 816.0L726.3 817.6L728.3 816.6L730.4 816.2L731.8 812.6L733.4 813.2L734.4 809.6L735.8 815.0L737.4 817.0L739.4 816.6L741.5 817.0L743.1 813.6L744.5 814.0L746.1 818.0L748.5 818.2L751.2 818.0L752.6 815.0L754.2 811.6L756.2 809.6L757.6 813.6L759.7 814.0L761.1 807.6L762.7 813.6L764.7 814.0L766.3 810.6L768.3 812.0L769.8 812.6L770.8 817.6L772.4 814.6L773.8 818.2L775.8 816.2L777.2 786.5L778.9 784.5L779.9 719.2L782.3 721.2L783.5 792.5L784.9 822.6L786.5 875.8L788.6 872.8L790.4 874.8L792.0 876.4L794.0 877.8L796.0 880.9L798.1 880.5L799.1 876.4L800.5 877.8L802.1 873.8L803.5 876.8L805.1 878.5L806.1 852.8L807.1 812.6L809.2 811.6L811.2 812.6L812.8 812.2L814.2 815.6L816.2 816.6L818.3 816.2L819.3 821.6L820.9 819.6L821.9 800.5L822.9 796.1L824.9 797.5L827.4 799.5L829.4 801.5L831.4 801.1L833.4 802.2L835.4 801.5L837.5 802.2L839.5 800.5L841.1 793.1L842.5 803.6L844.1 802.2L846.0 801.5L849.2 806.2L874.2 797.5" fill="none" stroke="#e25f52" stroke-width="1.9" stroke-linejoin="round"/>
<path d="M153 686H875" stroke="#6a9fd6" stroke-width="2"/>
<path d="M153 941H875" stroke="#6aa35c" stroke-width="4"/>
<path d="M1661.2 1148.6H2926.8" stroke="rgba(214,214,226,0.2)" stroke-width="1.5"/>
<path d="M1661.2 1197.0H2926.8" stroke="rgba(214,214,226,0.2)" stroke-width="1.5"/>
<path d="M1661.2 1245.3H2926.8" stroke="rgba(214,214,226,0.2)" stroke-width="1.5"/>
<path d="M1811.7 1148.6V1245.3" stroke="rgba(214,214,226,0.2)" stroke-width="1.5"/>
<path d="M1992.3 1148.6V1245.3" stroke="rgba(214,214,226,0.2)" stroke-width="1.5"/>
<path d="M2172.9 1148.6V1245.3" stroke="rgba(214,214,226,0.2)" stroke-width="1.5"/>
<path d="M2353.5 1148.6V1245.3" stroke="rgba(214,214,226,0.2)" stroke-width="1.5"/>
<path d="M2534.1 1148.6V1245.3" stroke="rgba(214,214,226,0.2)" stroke-width="1.5"/>
<path d="M2714.7 1148.6V1245.3" stroke="rgba(214,214,226,0.2)" stroke-width="1.5"/>
<path d="M2895.3 1148.6V1245.3" stroke="rgba(214,214,226,0.2)" stroke-width="1.5"/>
<defs><linearGradient id="gl" x1="0" y1="0" x2="0" y2="1"><stop offset="0" stop-color="#f05a28"/><stop offset="0.35" stop-color="#f47b2a"/><stop offset="1" stop-color="#fbca0a"/></linearGradient><linearGradient id="gg" x1="0" y1="0" x2="0" y2="1"><stop offset="0" stop-color="#6b6b6a"/><stop offset="1" stop-color="#6b6b6a"/></linearGradient></defs>
<g transform="translate(20.00 40.00) scale(1.0000) translate(-20 -40)"><path d="M50.41 49.77L53.96 54.41L62.24 54.50L66.03 61.13L67.78 69.74L66.03 71.78L67.11 79.11L62.10 82.52L57.27 90.57L50.26 87.54L39.76 88.67L37.49 81.10L30.20 74.95L35.12 67.38L34.46 57.11L43.64 55.54Z" fill="url(#gl)" stroke="url(#gl)" stroke-width="2.6" stroke-linejoin="round"/><path d="M67.33 70.49C66.97 69.69 66.08 67.13 65.15 65.73C64.22 64.33 62.96 62.99 61.75 62.09C60.53 61.18 59.24 60.61 57.86 60.29C56.49 59.97 55.03 59.97 53.50 60.15C51.96 60.32 50.10 60.59 48.64 61.36C47.18 62.13 45.74 63.46 44.76 64.76C43.77 66.05 43.06 67.67 42.72 69.13C42.38 70.58 42.39 72.04 42.72 73.50C43.04 74.95 43.75 76.67 44.66 77.86C45.57 79.06 46.93 80.10 48.16 80.68C49.39 81.26 50.74 81.41 52.04 81.36C53.33 81.31 54.79 81.04 55.92 80.39C57.06 79.74 58.20 78.62 58.83 77.48C59.47 76.33 59.85 74.72 59.71 73.50C59.56 72.27 58.82 70.92 57.96 70.10C57.10 69.27 55.55 68.61 54.56 68.54C53.58 68.48 52.54 69.03 52.04 69.71C51.54 70.39 51.29 71.91 51.55 72.62C51.81 73.33 53.25 73.75 53.59 73.98" fill="none" stroke="#1b1c20" stroke-width="5.0" stroke-linecap="round"/><path d="M70.49 71.55C69.96 71.38 68.22 71.46 67.33 70.49C66.44 69.51 65.51 66.52 65.15 65.73" fill="none" stroke="#1b1c20" stroke-width="2.2" stroke-linecap="butt"/></g>
<g transform="translate(45.30 -1.60) scale(0.6350) translate(-29.5 -49)"><path d="M50.41 49.77L53.96 54.41L62.24 54.50L66.03 61.13L67.78 69.74L66.03 71.78L67.11 79.11L62.10 82.52L57.27 90.57L50.26 87.54L39.76 88.67L37.49 81.10L30.20 74.95L35.12 67.38L34.46 57.11L43.64 55.54Z" fill="#626261" stroke="#626261" stroke-width="2.6" stroke-linejoin="round"/><path d="M67.33 70.49C66.97 69.69 66.08 67.13 65.15 65.73C64.22 64.33 62.96 62.99 61.75 62.09C60.53 61.18 59.24 60.61 57.86 60.29C56.49 59.97 55.03 59.97 53.50 60.15C51.96 60.32 50.10 60.59 48.64 61.36C47.18 62.13 45.74 63.46 44.76 64.76C43.77 66.05 43.06 67.67 42.72 69.13C42.38 70.58 42.39 72.04 42.72 73.50C43.04 74.95 43.75 76.67 44.66 77.86C45.57 79.06 46.93 80.10 48.16 80.68C49.39 81.26 50.74 81.41 52.04 81.36C53.33 81.31 54.79 81.04 55.92 80.39C57.06 79.74 58.20 78.62 58.83 77.48C59.47 76.33 59.85 74.72 59.71 73.50C59.56 72.27 58.82 70.92 57.96 70.10C57.10 69.27 55.55 68.61 54.56 68.54C53.58 68.48 52.54 69.03 52.04 69.71C51.54 70.39 51.29 71.91 51.55 72.62C51.81 73.33 53.25 73.75 53.59 73.98" fill="none" stroke="#302f2d" stroke-width="5.0" stroke-linecap="round"/><path d="M70.49 71.55C69.96 71.38 68.22 71.46 67.33 70.49C66.44 69.51 65.51 66.52 65.15 65.73" fill="none" stroke="#302f2d" stroke-width="2.2" stroke-linecap="butt"/></g>
<g transform="translate(1277.30 -1.60) scale(0.6250) translate(-29.5 -49)"><path d="M50.41 49.77L53.96 54.41L62.24 54.50L66.03 61.13L67.78 69.74L66.03 71.78L67.11 79.11L62.10 82.52L57.27 90.57L50.26 87.54L39.76 88.67L37.49 81.10L30.20 74.95L35.12 67.38L34.46 57.11L43.64 55.54Z" fill="#575756" stroke="#575756" stroke-width="2.6" stroke-linejoin="round"/><path d="M67.33 70.49C66.97 69.69 66.08 67.13 65.15 65.73C64.22 64.33 62.96 62.99 61.75 62.09C60.53 61.18 59.24 60.61 57.86 60.29C56.49 59.97 55.03 59.97 53.50 60.15C51.96 60.32 50.10 60.59 48.64 61.36C47.18 62.13 45.74 63.46 44.76 64.76C43.77 66.05 43.06 67.67 42.72 69.13C42.38 70.58 42.39 72.04 42.72 73.50C43.04 74.95 43.75 76.67 44.66 77.86C45.57 79.06 46.93 80.10 48.16 80.68C49.39 81.26 50.74 81.41 52.04 81.36C53.33 81.31 54.79 81.04 55.92 80.39C57.06 79.74 58.20 78.62 58.83 77.48C59.47 76.33 59.85 74.72 59.71 73.50C59.56 72.27 58.82 70.92 57.96 70.10C57.10 69.27 55.55 68.61 54.56 68.54C53.58 68.48 52.54 69.03 52.04 69.71C51.54 70.39 51.29 71.91 51.55 72.62C51.81 73.33 53.25 73.75 53.59 73.98" fill="none" stroke="#1c1b19" stroke-width="5.0" stroke-linecap="round"/><path d="M70.49 71.55C69.96 71.38 68.22 71.46 67.33 70.49C66.44 69.51 65.51 66.52 65.15 65.73" fill="none" stroke="#1c1b19" stroke-width="2.2" stroke-linecap="butt"/></g>
<rect x="2386" y="-8" width="31.2" height="36.8" rx="6.5" fill="#6c6c6b"/>
<rect x="2394.3" y="10" width="15.2" height="15.2" rx="3" fill="#464646" transform="rotate(45 2401.9 17.6)"/>
<path d="M2401.9 14.2l1.1 2.3 2.3 1.1-2.3 1.1-1.1 2.3-1.1-2.3-2.3-1.1 2.3-1.1z" fill="#7a7a79"/>
<path d="M2401.5 7.5C2397 6 2394.5 3 2394 -1l3 0c3 2 4.5 5 4.5 8.5zM2402.3 7.5c0.500-3 2.500-5 5.200-5.800c0.200 3-1.800 5.200-5.200 5.800z" fill="#484848"/>
<circle cx="1167.2" cy="70.4" r="9.4" stroke="#a1a2ae" stroke-width="2.2"/><path d="M1174.2 77.4L1179.6 82.5" stroke="#a1a2ae" stroke-width="2.2" stroke-linecap="round"/>
<rect x="1757.6" y="64.1" width="23.1" height="14" rx="3.2" stroke="#a9aab6" stroke-width="2.3"/>
<rect x="1760.4" y="68" width="2.6" height="1.9" rx="0.6" fill="#a9aab6"/>
<rect x="1765.3" y="68" width="2.6" height="1.9" rx="0.6" fill="#a9aab6"/>
<rect x="1770.1000000000001" y="68" width="2.6" height="1.9" rx="0.6" fill="#a9aab6"/>
<rect x="1774.9" y="68" width="2.6" height="1.9" rx="0.6" fill="#a9aab6"/>
<rect x="1760.5" y="72.5" width="2.3" height="2" rx="0.6" fill="#a9aab6"/><rect x="1764.9" y="72.4" width="8.2" height="2.2" rx="1" fill="#a9aab6"/><rect x="1775.4" y="72.5" width="2.3" height="2" rx="0.6" fill="#a9aab6"/>
<circle cx="2786.3" cy="71.1" r="11.7" stroke="#a1a2ae" stroke-width="2.6"/>
<path d="M2783.1 68.2c0-2.300 1.500-3.700 3.400-3.700c1.900 0 3.300 1.300 3.300 3c0 2.700-3.300 2.700-3.300 5.600" stroke="#a1a2ae" stroke-width="2.5" stroke-linecap="round"/><circle cx="2786.4" cy="77.2" r="1.5" fill="#a1a2ae"/>
<circle cx="2846.6" cy="80.2" r="2.9" stroke="#a1a2ae" stroke-width="2.3"/>
<path d="M2846.2 72.2A8.7 8.7 0 0 1 2854.3 80.3" stroke="#a1a2ae" stroke-width="2.6" stroke-linecap="round"/>
<path d="M2846.2 66.8A14.1 14.1 0 0 1 2859.7 80.3" stroke="#a1a2ae" stroke-width="2.6" stroke-linecap="round"/>
<path d="M2846.2 61.5A19.4 19.4 0 0 1 2865.0 80.3" stroke="#a1a2ae" stroke-width="2.6" stroke-linecap="round"/>
<path d="M184.79999999999998 136.4l5.5 5.3l-5.5 5.2" stroke="#8a8b97" stroke-width="2.7" stroke-linecap="round" stroke-linejoin="round"/>
<path d="M367.20000000000005 136.4l5.5 5.3l-5.5 5.2" stroke="#8a8b97" stroke-width="2.7" stroke-linecap="round" stroke-linejoin="round"/>
<path d="M582.6 136.4l5.5 5.3l-5.5 5.2" stroke="#8a8b97" stroke-width="2.7" stroke-linecap="round" stroke-linejoin="round"/>
<path d="M1284 138.700L1292.3 134.400M1284 142.500L1292.300 146.600" stroke="#d4d5e0" stroke-width="2.3"/>
<circle cx="1295.9" cy="132.5" r="4.2" stroke="#d4d5e0" stroke-width="2.6"/>
<circle cx="1280.4" cy="140.6" r="4.2" stroke="#d4d5e0" stroke-width="2.6"/>
<circle cx="1295.9" cy="148.5" r="4.2" stroke="#d4d5e0" stroke-width="2.6"/>
<circle cx="2513.8" cy="140.7" r="11.8" stroke="#a1a2ae" stroke-width="2.6"/><path d="M2513.8 133.900V141.200H2509.200" stroke="#a1a2ae" stroke-width="2.4" stroke-linecap="round" stroke-linejoin="round"/>
<path d="M2642.4 138.1l5.200 5.000l5.200-5.000" stroke="#a1a2ae" stroke-width="2.4" stroke-linecap="round" stroke-linejoin="round"/>
<path d="M2876.7 138.1l5.200 5.000l5.200-5.000" stroke="#a1a2ae" stroke-width="2.4" stroke-linecap="round" stroke-linejoin="round"/>
<circle cx="2705.4" cy="139.700" r="10.800" stroke="#a1a2ae" stroke-width="2.6"/><path d="M2699.200 139.700H2711.700M2713.200 148L2719 153.300" stroke="#a1a2ae" stroke-width="2.6" stroke-linecap="round"/>
<path d="M2772.4 136.6A11.4 11.4 0 0 1 2794.4 140.9" stroke="#a1a2ae" stroke-width="2.6" stroke-linecap="round"/>
<path d="M2793.6 145.2A11.4 11.4 0 0 1 2771.6 140.9" stroke="#a1a2ae" stroke-width="2.6" stroke-linecap="round"/>
<path d="M2772.400 129.200V136.300H2779.500" stroke="#a1a2ae" stroke-width="2.6" stroke-linecap="round" stroke-linejoin="round"/>
<path d="M2793.700 152.500V145.400H2786.600" stroke="#a1a2ae" stroke-width="2.6" stroke-linecap="round" stroke-linejoin="round"/>
<path d="M2949.800 146.400L2956.700 140.400L2963.800 146.400" stroke="#a1a2ae" stroke-width="3.7" stroke-linecap="round" stroke-linejoin="round"/>
<path d="M733 1147.200l4.900 4.700l4.900-4.700" stroke="#3f9fdf" stroke-width="2.2" stroke-linecap="round" stroke-linejoin="round"/>
<circle cx="1866.3" cy="1090.3" r="10.6" stroke="#82a7f8" stroke-width="2.3"/><path d="M1866.300 1084.300V1090.700H1862.200" stroke="#82a7f8" stroke-width="2.2" stroke-linecap="round" stroke-linejoin="round"/>
</svg>
</body></html>
